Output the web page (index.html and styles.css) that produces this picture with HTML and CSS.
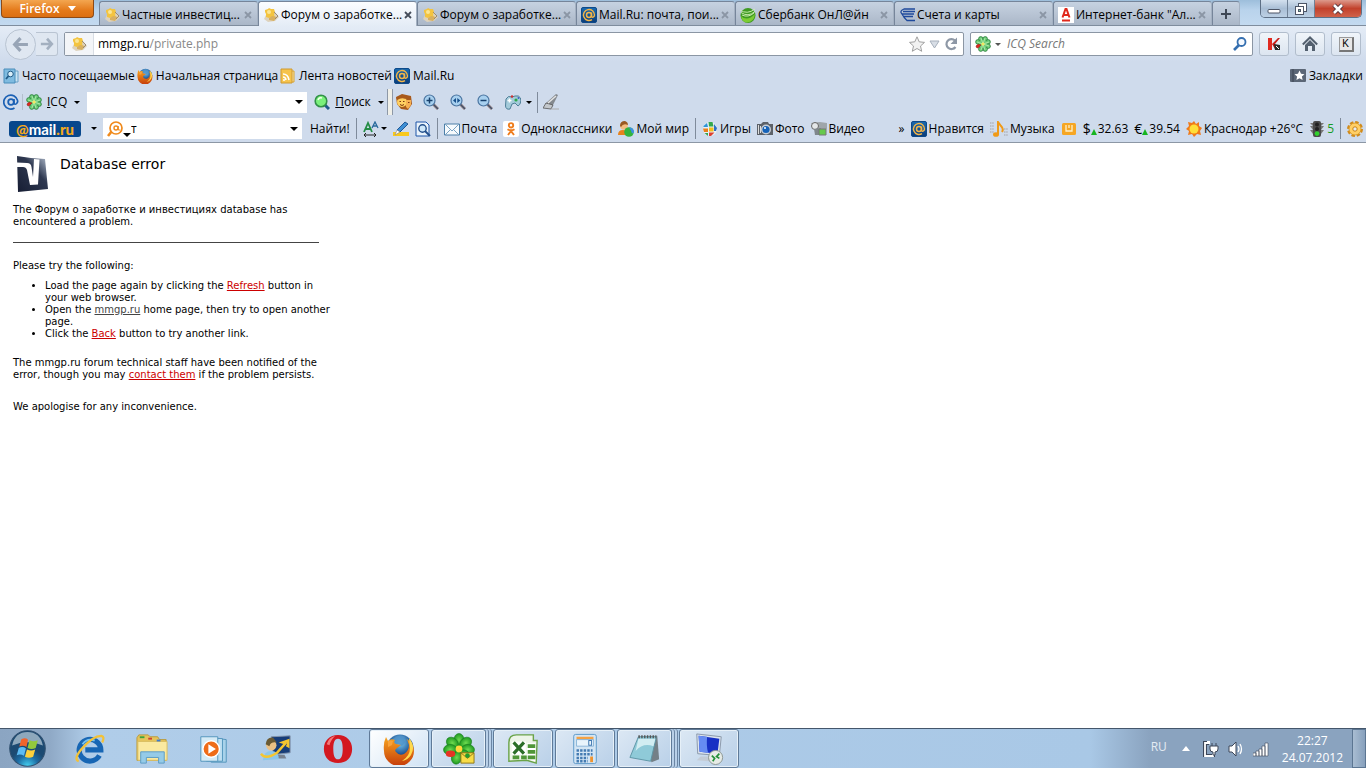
FILE: index.html
```html
<!DOCTYPE html>
<html lang="ru">
<head>
<meta charset="utf-8">
<title>Форум о заработке</title>
<link rel="stylesheet" href="styles.css">
</head>
<body>
<svg class="defs" aria-hidden="true">
  <defs>
    <linearGradient id="blue" x1="0" y1="0" x2="0" y2="1"><stop offset="0" stop-color="#1a6ab0"/><stop offset="1" stop-color="#0b3c78"/></linearGradient>
    <radialGradient id="leaf"><stop offset="0" stop-color="#6fdc50"/><stop offset="1" stop-color="#1f9a22"/></radialGradient>
    <radialGradient id="globe" cx=".5" cy=".3"><stop offset="0" stop-color="#7fd0f4"/><stop offset="1" stop-color="#0d3f86"/></radialGradient>
    <linearGradient id="fox" x1="0" y1="0" x2="0" y2="1"><stop offset="0" stop-color="#f7a520"/><stop offset="1" stop-color="#c63c0a"/></linearGradient>
    <radialGradient id="orb" cx=".5" cy="1"><stop offset="0" stop-color="#46d4f4"/><stop offset=".6" stop-color="#1c6ca4"/><stop offset="1" stop-color="#1c4a72"/></radialGradient>
  </defs>
  <symbol id="coin" viewBox="0 0 16 16"><path d="M1 12l5-10 6 3 4 5-4 4-7 1z" fill="#ddd2bc"/><path d="M2 3l3-1 1-1 2 1 3 0 1 3-1 3 1 2-4 0-2 1-3-1 0-3-1-2z" fill="#f3c440"/><circle cx="6" cy="5" r="2" fill="#fbe694"/><path d="M6 11l3-2 5 1-3 4-5-1z" fill="#d8b060"/><path d="M11 5l4 4-3 3" stroke="#9a8a72" fill="none"/></symbol>
  <symbol id="at" viewBox="0 0 16 16"><rect x=".5" y=".5" width="15" height="15" rx="1.500" fill="url(#blue)" stroke="#0d4a8a"/><circle cx="8" cy="8" r="2.500" fill="none" stroke="#f2b548" stroke-width="1.500"/><path d="M10.500 5.500v3.500q0 1.500 1.500 1.200Q13.500 9.500 13.500 8A5.500 5.500 0 1 0 11 12.600" fill="none" stroke="#f2b548" stroke-width="1.400"/></symbol>
  <symbol id="flower" viewBox="0 0 16 16"><circle cx="8" cy="8" r="5" fill="#62c870"/><g fill="#6ccc78" stroke="#1f7430" stroke-width=".7"><circle cx="5.800" cy="2.900" r="2.300"/><circle cx="10.200" cy="2.900" r="2.300"/><circle cx="13.100" cy="5.900" r="2.300"/><circle cx="13.100" cy="10.200" r="2.300"/><circle cx="10.200" cy="13.100" r="2.300"/><circle cx="5.800" cy="13.100" r="2.300"/><circle cx="2.900" cy="5.900" r="2.300"/></g><circle cx="8" cy="8" r="4.500" fill="#6ccc78"/><path d="M8 8L6 2M8 8l2-6M8 8l6-2M8 8l6 2M8 8l2 6M8 8l-2 6M8 8L2 6" stroke="#b8ecb0" stroke-width=".8"/><path d="M1 10q2-3 5-1l-3 3q-2 0-2-2z" fill="#e0281c" stroke="#902018" stroke-width=".6"/><circle cx="8" cy="8" r="1.600" fill="#f5e660"/></symbol>
  <symbol id="firefox" viewBox="0 0 32 32"><circle cx="17" cy="15" r="13.500" fill="url(#globe)"/><path d="M10 6q6-6 12-2-3 3 1 5l-4 4-4-2-5 1z" fill="#4f91c8" opacity=".8"/><path d="M3 4l2 4q3-3 7-1-2 3 1 4l5 1-4 3q-3 2-1 4 3 4 8 2 5-3 5-9l-2-6q7 5 7 12A15 15 0 0 1 1 18Q0 10 3 4z" fill="url(#fox)"/><path d="M26 5q7 8 2 17-3 5-9 6 8-5 8-13z" fill="#ffd94d"/><path d="M5 8q3-1 5 0l-1 4-4 2z" fill="#f8a23a"/></symbol>
  <symbol id="lens" viewBox="0 0 16 16"><path d="M10 10l5 5" stroke="#a08c8c" stroke-width="3"/><path d="M10 10l5 5" stroke="#40506a" stroke-width="1.400"/><circle cx="6.500" cy="6.500" r="5.500" fill="#a8d0ef" stroke="#4a74a0" stroke-width="1.200"/></symbol>
  <symbol id="close" viewBox="0 0 8 8"><path d="M1 1l6 6M7 1l-6 6" stroke="currentColor" stroke-width="1.800" fill="none"/></symbol>
</svg>

<header class="chrome">
  <div class="titlebar">
    <button class="app-button">Firefox <i class="tri white"></i></button>
    <nav class="tabs" aria-label="Вкладки">
      <div class="tab"><svg class="ico"><use href="#coin"/></svg><span>Частные инвестиц...</span><button class="tab-x" aria-label="Закрыть"><svg><use href="#close"/></svg></button></div>
      <div class="tab active"><svg class="ico"><use href="#coin"/></svg><span>Форум о заработке...</span><button class="tab-x" aria-label="Закрыть"><svg><use href="#close"/></svg></button></div>
      <div class="tab"><svg class="ico"><use href="#coin"/></svg><span>Форум о заработке...</span><button class="tab-x" aria-label="Закрыть"><svg><use href="#close"/></svg></button></div>
      <div class="tab"><svg class="ico"><use href="#at"/></svg><span>Mail.Ru: почта, пои...</span><button class="tab-x" aria-label="Закрыть"><svg><use href="#close"/></svg></button></div>
      <div class="tab"><svg class="ico" viewBox="0 0 16 16"><circle cx="8" cy="8.500" r="7.500" fill="#3f9a22"/><path d="M1 9q6 6 14-2-1 8-8 8.500Q2 15 1 9z" fill="#7ccc34"/><path d="M0 3q7 5 15-1M1 5.500q7 5 14-1M2 8q6 3 12-2" stroke="#d4f0b8" stroke-width=".9" fill="none"/></svg><span>Сбербанк ОнЛ@йн</span><button class="tab-x" aria-label="Закрыть"><svg><use href="#close"/></svg></button></div>
      <div class="tab"><svg class="ico" viewBox="0 0 16 16"><path d="M16 2H5Q0 4 3 7q2 4 5 6.500h8M4 4.500h12M3 7h12M5 9.500h9" stroke="#1f4a9c" stroke-width="1.300" fill="none"/></svg><span>Счета и карты</span><button class="tab-x" aria-label="Закрыть"><svg><use href="#close"/></svg></button></div>
      <div class="tab"><svg class="ico" viewBox="0 0 16 16"><path d="M0 0h16v16H0z" fill="#fff"/><path d="M4.500 10.500L7.500 2h1l3 8.500M5.500 8h5" stroke="#e0281c" stroke-width="2" fill="none"/><path d="M4 13.500h8" stroke="#e0281c" stroke-width="2"/></svg><span>Интернет-банк "Ал...</span><button class="tab-x" aria-label="Закрыть"><svg><use href="#close"/></svg></button></div>
      <button class="tab new" aria-label="Новая вкладка"><svg viewBox="0 0 12 12"><path d="M6 1v10M1 6h10" stroke="#3f4856" stroke-width="2"/></svg></button>
    </nav>
    <div class="window-buttons">
      <button aria-label="Свернуть"><svg viewBox="0 0 14 12"><rect x="1" y="6.500" width="12" height="3.500" rx="1" fill="#fff" stroke="#4c5566"/></svg></button>
      <button aria-label="Развернуть"><svg viewBox="0 0 14 12"><rect x="4.500" y=".5" width="8" height="8" fill="#fff" stroke="#4c5566"/><rect x="1.500" y="3.500" width="8" height="8" fill="#fff" stroke="#4c5566"/><rect x="4.500" y="6.500" width="2" height="2" fill="#8ca" stroke="#4c5566"/></svg></button>
      <button class="close" aria-label="Закрыть окно"><svg viewBox="0 0 14 12"><path d="M3 2l8 8M11 2l-8 8" stroke="#4c3038" stroke-width="4.500"/><path d="M3 2l8 8M11 2l-8 8" stroke="#fff" stroke-width="2.600"/></svg></button>
    </div>
  </div>

  <div class="navbar">
    <div class="history">
      <button class="back" aria-label="Назад"><svg viewBox="0 0 16 16"><path d="M8 2L2.500 8 8 14M3 8h12" stroke="#98a5b6" stroke-width="3" fill="none"/></svg></button>
      <button class="forward" aria-label="Вперёд"><svg viewBox="0 0 16 16"><path d="M8 2l5.500 6L8 14M13 8H1" stroke="#a3b0c0" stroke-width="3" fill="none"/></svg></button>
    </div>
    <div class="field url">
      <span class="identity"><svg class="ico"><use href="#coin"/></svg></span>
      <span class="address">mmgp.ru<em>/private.php</em></span>
      <button aria-label="В закладки"><svg viewBox="0 0 16 16"><path d="M8 .8l2.200 5 5.300.6-4 3.600 1.200 5.300L8 12.500l-4.700 2.800L4.500 10l-4-3.600 5.300-.6z" fill="#f2f2f2" stroke="#a0a0a0"/></svg></button>
      <button class="drop" aria-label="История"><svg viewBox="0 0 12 16"><path d="M2 5h9l-4.500 7z" fill="#d8dee6" stroke="#a7b0bc"/></svg></button>
      <button aria-label="Обновить"><svg viewBox="0 0 16 16"><path d="M12.500 11A5 5 0 1 1 12 4.500" stroke="#8e98a6" stroke-width="2.200" fill="none"/><path d="M14 1.500V8H7.500z" fill="#8e98a6"/></svg></button>
    </div>
    <div class="field search">
      <svg class="ico"><use href="#flower"/></svg><i class="tri gray"></i>
      <input type="text" placeholder="ICQ Search" aria-label="ICQ Search">
      <button aria-label="Искать"><svg viewBox="0 0 16 16"><path d="M7 9l-5 5" stroke="#356fb0" stroke-width="2.600"/><circle cx="9.500" cy="6" r="4" fill="#f4f9ff" stroke="#356fb0" stroke-width="1.800"/></svg></button>
    </div>
    <button class="square" aria-label="Kaspersky"><svg class="ico" viewBox="0 0 16 16"><path d="M2 2h4v12H2z" fill="#e02a20"/><path d="M6 8l6-6h2L9 8l3 5H9z" fill="#c81c18"/><path d="M8 8l6 1v5H9z" fill="#282828"/><path d="M10 10l3 3" stroke="#fff"/></svg></button>
    <button class="square" aria-label="Домой"><svg class="ico" viewBox="0 0 16 16"><path d="M.8 8.500L8 1.500l7.200 7" stroke="#53606f" stroke-width="2" fill="none"/><path d="M3 9l5-5 5 5v6h-3v-5H6v5H3z" fill="#53606f"/></svg></button>
    <button class="square key" aria-label="Клавиатура"><span>K</span></button>
  </div>

  <div class="bookmarks">
    <a href="#"><svg class="ico" viewBox="0 0 16 16"><path d="M5 3h10v11H5z" fill="#c8e4f4" stroke="#6ba3c8"/><path d="M1 1h11v14H1z" fill="#7fbbe0" stroke="#4a8dba"/><circle cx="7.500" cy="6" r="2.800" fill="#d9effa" stroke="#215a86"/><path d="M5.500 8L3 11" stroke="#215a86" stroke-width="1.800"/></svg>Часто посещаемые</a>
    <a href="#"><svg class="ico"><use href="#firefox"/></svg>Начальная страница</a>
    <a href="#"><svg class="ico" viewBox="0 0 16 16"><path d="M5 3h9v11H5z" fill="#fbe3a0" stroke="#d9a430"/><path d="M1 1h11v14H1z" fill="#f6c34c" stroke="#cf9a30"/><path d="M3 6q5 0 6 6M3 9q2.500 0 3 3" stroke="#fff" stroke-width="1.600" fill="none"/><circle cx="4" cy="12" r="1" fill="#fff"/></svg>Лента новостей</a>
    <a href="#"><svg class="ico"><use href="#at"/></svg>Mail.Ru</a>
    <a href="#" class="push"><svg class="ico" viewBox="0 0 16 16"><rect y="1" width="16" height="13" rx="1" fill="#5b6676"/><path d="M3 1v13" stroke="#3c4452"/><path d="M9.500 2.500l1.500 3.300 3.500.4-2.600 2.300.7 3.500-3.100-1.800L6.400 12l.7-3.500-2.600-2.300 3.500-.4z" fill="#fff"/></svg>Закладки</a>
  </div>

  <div class="toolbar icq">
    <svg class="ico" viewBox="0 0 16 16"><circle cx="8" cy="8" r="2.800" fill="none" stroke="#1a60b4" stroke-width="1.800"/><path d="M11 5v4.500q1 1.500 2.600 0Q15 8 14.600 6.500A7 7 0 1 0 11.500 14" fill="none" stroke="#1a60b4" stroke-width="1.700"/></svg>
    <i class="sep thin"></i>
    <button class="item"><svg class="ico"><use href="#flower"/></svg><span><u>I</u>CQ</span><i class="tri small"></i></button>
    <div class="combo"><input type="text" aria-label="Поисковый запрос"><i class="tri"></i></div>
    <button class="item"><svg class="ico" viewBox="0 0 16 16"><path d="M10 10l5 5" stroke="#205a8c" stroke-width="3"/><circle cx="7" cy="7" r="5.800" fill="#7af07c" stroke="#329048" stroke-width="1.600"/><path d="M4 6q1-3 4-2" stroke="#efffe8" stroke-width="1.500" fill="none"/></svg><span><u>П</u>оиск</span><i class="tri small"></i></button>
    <i class="grip"></i>
    <div class="tools">
      <button aria-label="Смайлы"><svg class="ico" viewBox="0 0 16 16"><path d="M0 3l6-3 9 2 1 8-4 6-7-1-4-5z" fill="#a85a1c"/><circle cx="6" cy="8" r="5" fill="#ffd060"/><path d="M10 6h5v5l-3 4-2-2z" fill="#f6b052"/><path d="M1 5q4-3 9-1" stroke="#a85a1c" stroke-width="2" fill="none"/><path d="M3.500 7.500h1.500M7 7.500h1.500M4 10.500q2 2 4 0M12 8.500h1.500" stroke="#7a3410" fill="none"/></svg></button>
      <button aria-label="Увеличить"><svg class="ico" viewBox="0 0 16 16"><use href="#lens"/><path d="M6.500 3.500v6M3.500 6.500h6" stroke="#17406c" stroke-width="1.500"/></svg></button>
      <button aria-label="Масштаб"><svg class="ico" viewBox="0 0 16 16"><use href="#lens"/><path d="M6 4v5L3 6.500zM7.300 4v5l3-2.500z" fill="#17508c"/></svg></button>
      <button aria-label="Уменьшить"><svg class="ico" viewBox="0 0 16 16"><use href="#lens"/><path d="M3.500 6.500h6" stroke="#17406c" stroke-width="1.500"/></svg></button>
    </div>
    <button class="item" aria-label="Игры"><svg class="ico" viewBox="0 0 16 16"><path d="M1 5q2-4 6-2l3-1q4-1 5.500 2 1 6-2.500 8l-3-3-3 1-2 5q-4 1-4.500-3z" fill="#a4cbda" stroke="#4f7f98"/><path d="M2.500 6.500h4M4.500 4.500v4" stroke="#fff" stroke-width="1.500"/><circle cx="11" cy="6" r="1.600" fill="#2ca84c"/><circle cx="7" cy="2.500" r="1.200" fill="#d03030"/><circle cx="13.500" cy="4" r="1" fill="#3a62c0"/></svg><i class="tri small"></i></button>
    <i class="sep"></i>
    <button aria-label="Очистить"><svg class="ico" viewBox="0 0 16 16"><path d="M2 10L13 0l2 1-6 12z" fill="#84898e"/><path d="M0 14l3-5 7 2-2 4z" fill="#c4c8cc" stroke="#555" stroke-width=".8"/><path d="M5 9l8-7" stroke="#e4e4e4" stroke-width="1.500"/><path d="M8 15h8" stroke="#aaa"/></svg></button>
  </div>

  <div class="toolbar mail">
    <a href="#" class="brand"><b>@</b>mail<b>.ru</b></a><i class="tri small"></i>
    <div class="combo"><svg class="ico" viewBox="0 0 16 16"><path d="M5 10l-4 5" stroke="#f08a1c" stroke-width="2.600"/><circle cx="9" cy="7" r="6" fill="#fff" stroke="#f08a1c" stroke-width="1.700"/><circle cx="9" cy="7" r="2" fill="none" stroke="#f08a1c" stroke-width="1.400"/><path d="M11.300 5v4h2" stroke="#f08a1c" fill="none"/></svg><i class="tri low"></i><input type="text" value="т" aria-label="Поиск Mail.Ru"><i class="tri"></i></div>
    <button class="go">Найти!</button>
    <i class="sep"></i>
    <button class="item tight" aria-label="Размер текста"><svg class="ico" viewBox="0 0 16 16"><path d="M1 11L5 2l4 9M2.500 8h5" stroke="#248c44" stroke-width="1.800" fill="none"/><path d="M9 7l3-6 3 6M10 5h4" stroke="#28699c" stroke-width="1.300" fill="none"/><path d="M1 14h12M3 12l-2 2 2 2M11 12l2 2-2 2" stroke="#222" fill="none"/></svg><i class="tri small"></i></button>
    <button aria-label="Выделить"><svg class="ico" viewBox="0 0 16 16"><path d="M0 11h16v4H0z" fill="#f8c81c"/><path d="M4 9l8-8 3 2-8 8z" fill="#3d8ed4" stroke="#1f5896"/><path d="M4 9l3 2-5 3z" fill="#fff" stroke="#888" stroke-width=".6"/></svg></button>
    <button aria-label="Найти на странице"><svg class="ico" viewBox="0 0 16 16"><path d="M1 1h10l3 3v11H1z" fill="#eaf3fb" stroke="#1c54a8"/><circle cx="7.500" cy="7.500" r="3.700" fill="#cfe8fa" stroke="#23508c" stroke-width="1.400"/><path d="M10 10l5 5" stroke="#23508c" stroke-width="2"/></svg></button>
    <i class="sep"></i>
    <a href="#"><svg class="ico" viewBox="0 0 16 16"><path d="M.5 3h15v11H.5z" fill="#f6fafd" stroke="#4c7fa8"/><path d="M1 3l7 7 7-7M1 14l5-5M15 14l-5-5" stroke="#79a3c4" fill="none"/></svg>Почта</a>
    <a href="#"><svg class="ico" viewBox="0 0 16 16"><rect width="16" height="16" rx="2" fill="#fff"/><circle cx="8" cy="4.300" r="2.200" fill="none" stroke="#ee7c1c" stroke-width="1.900"/><path d="M4.500 8.200q3.500 2.200 7 0M8 10l-3 4M8 10l3 4" stroke="#ee7c1c" stroke-width="1.900" fill="none"/></svg>Одноклассники</a>
    <a href="#"><svg class="ico" viewBox="0 0 16 16"><path d="M0 14q0-5 5-5 4 0 6 5z" fill="#e6821c"/><circle cx="6" cy="5" r="3.800" fill="#f4bd80"/><path d="M2 5q0-5 5-5 3 1 3 4-5-2-7 2z" fill="#9a5a22"/><circle cx="11" cy="11" r="4.800" fill="#32b43c"/><path d="M11 6.500q5 0 5 5l-2 1-1-3z" fill="#3d8ee8"/></svg>Мой мир</a>
    <i class="sep"></i>
    <a href="#"><svg class="ico" viewBox="0 0 16 16"><circle cx="8" cy="8" r="7" fill="#e8f0f8"/><path d="M1.500 5L5 2l1 4H1.500z" fill="#2c94d8"/><path d="M6.500 1h4l1 4.500H7z" fill="#34a84c"/><path d="M12 3l3 4-1 3h-2z" fill="#2c70c4"/><path d="M1 7.500h5V11H2z" fill="#e8801c"/><path d="M7 6.500h4.500v4H7z" fill="#f2be1c"/><path d="M7 11.500h5.500L9 15H7z" fill="#de4030"/><path d="M2.500 12H6v3z" fill="#38a44c"/></svg>Игры</a>
    <a href="#"><svg class="ico" viewBox="0 0 16 16"><path d="M0 3h4l2-2h5l1 2h4v11H0z" fill="#5c6168"/><path d="M1.500 4v9M3.500 5v7" stroke="#ddd"/><circle cx="9" cy="8.500" r="5" fill="#c8ced6"/><circle cx="9" cy="8.500" r="3.600" fill="#1562b8"/><circle cx="8" cy="7" r="1" fill="#fff"/></svg>Фото</a>
    <a href="#"><svg class="ico" viewBox="0 0 16 16"><path d="M0 2l9-1 7 1v6H4z" fill="#9fa6aa"/><circle cx="4" cy="5" r="3.500" fill="#e4e7e9" stroke="#666"/><path d="M3 8l7-1v7H4z" fill="#7f878c"/><path d="M8 8h7v6H8z" fill="#65c94c" stroke="#777"/></svg>Видео</a>
    <span class="more">»</span>
    <a href="#"><svg class="ico"><use href="#at"/></svg>Нравится</a>
    <a href="#"><svg class="ico wide" viewBox="0 0 18 16"><path d="M0 2h4M0 5h4M0 8h4M0 11h4M14 11h4M14 14h4M14 8h4" stroke="#b9bec8" stroke-width="2" stroke-dasharray="1.500 .7"/><path d="M8 13V1l3 4q3 3 1 6" stroke="#f09a18" stroke-width="2" fill="none"/><ellipse cx="6" cy="13.500" rx="3" ry="2.300" fill="#f09a18"/></svg>Музыка</a>
    <a href="#" aria-label="Деньги"><svg class="ico" viewBox="0 0 16 16"><rect x="1" y="2" width="14" height="12" rx="1.500" fill="#f6a623"/><path d="M5 4v6h6V4M8 4v3" stroke="#fff0c8" stroke-width="1.300" fill="none"/></svg></a>
    <a href="#" class="rate"><strong>$</strong><i class="up"></i>32.63</a>
    <a href="#" class="rate"><strong>€</strong><i class="up"></i>39.54</a>
    <a href="#"><svg class="ico" viewBox="0 0 16 16"><path d="M8 0l2 3 3-2v4l3 2-2 3 1 4-4-1-3 3-2-3-4 1 1-4-3-2 3-3-1-4 4 1z" fill="#f07a18"/><circle cx="8" cy="8" r="4.500" fill="#ffdf38"/></svg>Краснодар +26°C</a>
    <a href="#" class="jam"><svg class="ico" viewBox="0 0 16 16"><path d="M1 2h14l-3 3h3l-3 4h3l-3 4H4L1 9h3L1 5h3z" fill="#777"/><rect x="4" width="8" height="16" rx="2" fill="#4a4a4a"/><circle cx="8" cy="3.500" r="2" fill="#222"/><circle cx="8" cy="8" r="2" fill="#222"/><circle cx="8" cy="12.600" r="2.400" fill="#2fd02c"/></svg>5</a>
    <i class="sep"></i>
    <button aria-label="Настройки"><svg class="ico" viewBox="0 0 16 16"><circle cx="8" cy="8" r="6.600" fill="none" stroke="#d08a1c" stroke-width="2.800" stroke-dasharray="3.400 1.780"/><circle cx="8" cy="8" r="6" fill="#ffcf66" stroke="#d8941c" stroke-width=".8"/><circle cx="8" cy="8" r="2.200" fill="#e6edf5" stroke="#c98212"/></svg></button>
  </div>
</header>

<main class="page">
  <div class="error">
    <div class="error-head">
      <svg class="vb" viewBox="0 0 32 38" aria-label="vBulletin"><defs><linearGradient id="vb" x1="0" y1="1" x2="1" y2="0"><stop offset="0" stop-color="#161d33"/><stop offset=".6" stop-color="#2e3850"/><stop offset="1" stop-color="#b8c4d4"/></linearGradient></defs><path d="M0 1l14 2 14 1 1 10 2 20L1 37z" fill="url(#vb)"/><path d="M0 7.500l10 .5q4 0 4.500 4l1.500 10 1-18 5.500.5-1.500 25-8 .5L10 15q-1-3-4-3H0z" fill="#fff"/></svg>
      <h1>Database error</h1>
    </div>
    <p>The Форум о заработке и инвестициях database has encountered a problem.</p>
    <hr>
    <p class="try">Please try the following:</p>
    <ul>
      <li>Load the page again by clicking the <a href="#">Refresh</a> button in your web browser.</li>
      <li>Open the <a href="#" class="home">mmgp.ru</a> home page, then try to open another page.</li>
      <li>Click the <a href="#">Back</a> button to try another link.</li>
    </ul>
    <p class="staff">The mmgp.ru forum technical staff have been notified of the error, though you may <a href="#">contact them</a> if the problem persists.</p>
    <p class="sorry">We apologise for any inconvenience.</p>
  </div>
</main>

<footer class="taskbar">
  <button class="launch start" aria-label="Пуск"><svg viewBox="0 0 36 36"><circle cx="18" cy="18" r="17.300" fill="url(#orb)" stroke="#31506f"/><path d="M3 15Q6 2 18 2t15 13Q18 9 3 15z" fill="#b4c8d6" opacity=".75"/><path d="M12 9q4-2 6.500.5l-1.500 7q-3-2-7-.5z" fill="#f0642c"/><path d="M20 10q4 2 8 0l-2 7.500q-4 2-8 0z" fill="#92c83c"/><path d="M9.500 17.500q4-2 7 .5l-2 7q-3.500-2-7-.5z" fill="#5cbcf4"/><path d="M17.500 19q4 2 8 0l-2 7q-4 2-8 0z" fill="#fcd03c"/></svg></button>
  <button class="launch" aria-label="Internet Explorer"><svg viewBox="0 0 34 34"><path d="M27 24A11.500 11.500 0 1 1 28.500 18H12" stroke="#1766b4" stroke-width="5.500" fill="none"/><path d="M9 12q5-7 13-4" stroke="#74c2f2" stroke-width="2" fill="none"/><path d="M5 30q-6-2 3-13Q20 3 29 3q4 1 1 7" stroke="#f3c238" stroke-width="2.400" fill="none"/></svg></button>
  <button class="launch" aria-label="Проводник"><svg viewBox="0 0 34 34"><path d="M1 5l2-3h10l2 2h8l2 3h7v22H1z" fill="#e5c45c" stroke="#b99a3c"/><path d="M2 9h31v20H2z" fill="#fae9a0" stroke="#d9bd60"/><path d="M4 4.500h5" stroke="#3ca43c" stroke-width="2"/><path d="M13 6h4" stroke="#d04030" stroke-width="2"/><path d="M22 8h4" stroke="#3b7ad0" stroke-width="2"/><path d="M5 32V20h25v12h-6v-6H11v6z" fill="#95cbe8" stroke="#5b9bc4"/></svg></button>
  <button class="launch" aria-label="Windows Media Player"><svg viewBox="0 0 34 34"><path d="M14 5l16 2v24H14z" fill="#a8d2ea" stroke="#5294bc"/><path d="M9 5l17 1v24H9z" fill="#bfe0f2" stroke="#5294bc"/><path d="M3 4h18v26H3z" fill="#d5ebf6" stroke="#5294bc"/><circle cx="14" cy="17" r="8.800" fill="#ee6c18" stroke="#fff" stroke-width="1.500"/><path d="M11 12l8 5-8 5z" fill="#fff"/></svg></button>
  <button class="launch" aria-label="Удалённый помощник"><svg viewBox="0 0 34 34"><path d="M12 4l20-1v18l-18 2z" fill="#173d78" stroke="#8495ac"/><path d="M18 23h8l2 4H18z" fill="#77818f"/><path d="M3 29q1-10 9-10t8 9z" fill="#8dc7ea"/><circle cx="12" cy="13" r="5.500" fill="#eac084"/><path d="M6 12q1-8 8-7l4 5q-7-1-8 4z" fill="#6a5a34"/><path d="M1 22q5 7 17-1l9-10-3-1 6-2v6l-2-1" stroke="#f5c630" stroke-width="2.600" fill="none"/></svg></button>
  <button class="launch" aria-label="Opera"><svg viewBox="0 0 34 34"><path fill-rule="evenodd" d="M17 2c9 0 15 6 15 15s-6 15-15 15S2 26 2 17 8 2 17 2zm0 4c-4 0-5 5-5 11s1 11 5 11 5-5 5-11-1-11-5-11z" fill="#d31820"/><path d="M5 12q2-7 9-9-5 5-6 10z" fill="#f47878"/></svg></button>

  <button class="task current" aria-label="Firefox"><svg><use href="#firefox"/></svg></button>
  <button class="task stacked" aria-label="ICQ"><svg viewBox="0 0 34 34"><g fill="url(#leaf)" stroke="#167a1c" stroke-width=".6"><ellipse cx="17" cy="7.500" rx="5.500" ry="7"/><ellipse cx="17" cy="7.500" rx="5.500" ry="7" transform="rotate(48 17 17)"/><ellipse cx="17" cy="7.500" rx="5.500" ry="7" transform="rotate(94 17 17)"/><ellipse cx="17" cy="7.500" rx="5.500" ry="7" transform="rotate(140 17 17)"/><ellipse cx="17" cy="7.500" rx="5.500" ry="7" transform="rotate(195 17 17)"/><ellipse cx="17" cy="7.500" rx="5.500" ry="7" transform="rotate(-48 17 17)"/><ellipse cx="17" cy="7.500" rx="5.500" ry="7" transform="rotate(-94 17 17)"/></g><ellipse cx="8" cy="22" rx="5" ry="3.500" fill="#e63424"/><circle cx="17" cy="17" r="3.600" fill="#ffd83c"/><path d="M19 21h14v11H19z" fill="#f8dc48" stroke="#8d7418"/><path d="M19 21l7 6 7-6" stroke="#8d7418" fill="none"/><circle cx="26" cy="24" r="2.500" fill="#279c2c"/></svg></button>
  <button class="task" aria-label="Excel"><svg viewBox="0 0 34 34"><path d="M2 30V10q0-8 8-8h18v6h4l-1 24-10-3z" fill="#eef5e8" stroke="#6aa348" stroke-width="1.500"/><path d="M21 11h9v19l-9-2z" fill="#fff"/><path d="M22 12h8v4h-8zM22 18h8v4h-8zM6 24h7v4H6zM15 24h6v4h-6zM22 24h8v4h-8z" fill="#4f9638"/><path d="M5 9h15v14H5z" fill="#fff"/><path d="M7 10l11 12M18 10L7 22" stroke="#2c6e28" stroke-width="3.400"/></svg></button>
  <button class="task" aria-label="Калькулятор"><svg viewBox="0 0 34 34"><rect x="5" y="1.500" width="24" height="31" rx="2" fill="#d3e5f4" stroke="#5b98c8"/><path d="M8 4h18v3H8z" fill="#f4a244"/><path d="M8 7h18v7H8z" fill="#e9f4fc" stroke="#8ab5d8"/><rect x="21" y="8" width="3" height="5" fill="none" stroke="#3973ad"/><path d="M8 18.500h17M8 22.500h17M8 26.500h12M8 30h12" stroke="#447bb2" stroke-width="2.600" stroke-dasharray="2.600 1.200"/><path d="M24 25v6" stroke="#ef9430" stroke-width="3"/></svg></button>
  <button class="task stacked" aria-label="Блокнот"><svg viewBox="0 0 34 34"><path d="M11 4l19-1 2 25-8 3z" fill="#748087"/><path d="M10 4h19l-6 26-22-4z" fill="#8fcad8" stroke="#5d94a4"/><path d="M10 6h18l-2 8Q15 10 7 19z" fill="#d2edf2"/><path d="M10 4h19" stroke="#555" stroke-width="3" stroke-dasharray="1.500 1.500"/></svg></button>
  <button class="task" aria-label="Удалённый рабочий стол"><svg viewBox="0 0 34 34"><path d="M4 1l26 3-2 20-23-2z" fill="#dce4ee" stroke="#8795a8"/><path d="M6 3l22 3-2 16-19-2z" fill="#1730c4"/><path d="M6 3l9 1q-1 10 1 17l-9-1z" fill="#668cf2"/><path d="M8 25h9v5l-13-1z" fill="#c4ccd6"/><circle cx="24" cy="26" r="7.500" fill="#e6ebe6" stroke="#8b9490"/><path d="M20 24l3 3-2 3M28 22l-3 3 3 2" stroke="#239038" stroke-width="1.800" fill="none"/></svg></button>

  <div class="tray">
    <span class="lang">RU</span>
    <button aria-label="Скрытые значки"><svg class="hid" viewBox="0 0 8 5"><path d="M0 5l4-5 4 5z" fill="#fff"/></svg></button>
    <svg class="ico" viewBox="0 0 16 16"><path d="M6 2H2v13h8v-2M4 1h3" stroke="#3c4658" stroke-width="4" fill="none"/><path d="M7 2H2v13h8v-2M4 1h3" stroke="#fff" stroke-width="1.800" fill="none"/><path d="M7 5h8v3q0 3-3 3v3h-2v-3q-3 0-3-3zM9 2v3M13 2v3" fill="#fff" stroke="#3c4658"/></svg>
    <svg class="ico" viewBox="0 0 16 16"><path d="M1 5h3l4-4v14l-4-4H1z" fill="#fff" stroke="#3c4658"/><path d="M10 5q2 3 0 6M12 3q3 5 0 10" stroke="#fff" stroke-width="1.300" fill="none"/></svg>
    <svg class="ico" viewBox="0 0 16 16"><g fill="#fff" stroke="#3c4658" stroke-width=".6"><path d="M0 12h3v3H0zM3 10h3v5H3zM6 8h3v7H6zM9 5h3v10H9zM12 2h3v13h-3z"/></g></svg>
    <time class="clock">22:27<br>24.07.2012</time>
    <button class="desktop" aria-label="Свернуть все окна"></button>
  </div>
</footer>
</body>
</html>
```
FILE: styles.css
```css
* { box-sizing: border-box; }

body {
  margin: 0;
  min-height: 100vh;
  display: flex;
  flex-direction: column;
  background: #fff;
  color: #000;
  font: 12px/16px "Open Sans", "Noto Sans", sans-serif;
}

button, input {
  margin: 0;
  padding: 0;
  border: 0;
  background: none;
  color: inherit;
  font: inherit;
}

a { color: inherit; text-decoration: none; }
svg { display: block; flex: none; }
.defs { position: absolute; width: 0; height: 0; }
.ico { width: 16px; height: 16px; flex: none; }
.ico.wide { width: 18px; }

.tri {
  flex: none;
  border: 4px solid transparent;
  border-top-color: #000;
  border-bottom: 0;
}
.tri.small { border-width: 3px; border-bottom: 0; }
.tri.white { border-top-color: #fff; border-top-width: 5px; }
.tri.gray { border-width: 3px; border-bottom: 0; border-top-color: #555; }
.tri.low { margin-top: 12px; }

.chrome {
  background: #cfdbec;
  border-bottom: 1px solid #8c97a5;
  white-space: nowrap;
}

.titlebar {
  display: flex;
  align-items: flex-start;
  height: 26px;
  padding: 0 4px 0 1px;
  background: linear-gradient(#9dbedb, #b9d3ec 40%, #c3daf0);
  border-bottom: 1px solid #7f8d9e;
}
.app-button {
  display: flex;
  align-items: center;
  justify-content: center;
  gap: 8px;
  width: 93px;
  height: 18px;
  margin-right: 5px;
  border: 1px solid #8c4a17;
  border-top: 0;
  border-radius: 0 0 4px 4px;
  background: linear-gradient(#f3a650, #e47a1b 60%, #db6f12);
  color: #fff;
  font-weight: 600;
}
.tabs { display: flex; flex: 1 1 0; min-width: 0; padding-top: 1px; height: 26px; }
.tab {
  display: flex;
  align-items: center;
  flex: 0 1 159px;
  min-width: 0;
  gap: 2px;
  height: 24px;
  padding: 2px 5px 0 4px;
  border: 1px solid #76859a;
  border-right-color: #a4b1c2;
  border-bottom: 0;
  border-radius: 3px 3px 0 0;
  background: linear-gradient(#c6d2e1, #b6c2d2 60%, #aab7c8);
}
.tab span { flex: 1; }
.tab.active {
  height: 25px;
  background: linear-gradient(#fbfdff, #e4ecf6);
}
.tab-x { color: #8b96a5; }
.tab-x svg { width: 8px; height: 8px; }
.active .tab-x { color: #454d5a; }
.tab.new { flex: 0 0 28px; justify-content: center; padding: 0; }
.tab.new svg { width: 12px; height: 12px; }

.window-buttons {
  display: flex;
  height: 18px;
  border: 1px solid #5d6f85;
  border-top: 0;
  border-radius: 0 0 5px 5px;
  overflow: hidden;
}
.window-buttons button {
  display: grid;
  place-items: center;
  width: 27px;
  border-right: 1px solid #6f8196;
  background: linear-gradient(#d3e0ee, #a9bed5 50%, #bcd0e4);
}
.window-buttons svg { width: 14px; height: 12px; }
.window-buttons .close {
  width: 46px;
  border-right: 0;
  background: linear-gradient(#dd9a8c, #c2412c 50%, #d0624a);
}

.navbar {
  display: flex;
  align-items: center;
  gap: 6px;
  height: 36px;
  padding: 0 5px;
  background: linear-gradient(#e4ecf6, #cfdbec);
}
.history { display: flex; align-items: center; width: 53px; }
.back, .forward {
  display: grid;
  place-items: center;
  border: 1px solid #b9c4d2;
  background: #dfe7f1;
}
.back { width: 31px; height: 31px; border-radius: 50%; }
.back svg { width: 17px; height: 17px; }
.forward { width: 22px; height: 24px; border-left: 0; border-radius: 0 3px 3px 0; }
.forward svg { width: 14px; height: 14px; }

.field {
  display: flex;
  align-items: center;
  height: 24px;
  border: 1px solid #8b96a4;
  border-radius: 2px;
  background: #fff;
}
.url { flex: 894 1 0; padding-right: 4px; }
.search { flex: 273 1 0; gap: 4px; padding: 0 4px; }
.search input { flex: 1; min-width: 0; padding-left: 2px; font-style: italic; }
.search input::placeholder { color: #777; opacity: 1; }
.field button svg { width: 16px; height: 16px; }
.field button { margin-left: 2px; }
.field .drop svg { width: 14px; }
.identity {
  display: grid;
  place-items: center;
  width: 29px;
  height: 22px;
  border-right: 1px solid #d8dde4;
  background: #f3f5f8;
}
.address { flex: 1; padding-left: 4px; }
.address em { color: #888; font-style: normal; }
.square {
  display: grid;
  place-items: center;
  width: 30px;
  height: 24px;
  border: 1px solid #b1bdcc;
  border-radius: 3px;
  background: linear-gradient(#f0f5fa, #dce5f0);
}
.key span {
  width: 15px;
  height: 15px;
  border: 1px solid #999;
  border-right: 2px solid #777;
  border-bottom: 2px solid #777;
  background: #e8e8e8;
  font: 10px/12px "Liberation Sans", sans-serif;
}

.bookmarks {
  display: flex;
  align-items: center;
  gap: 2px;
  height: 27px;
  padding: 0 3px;
}
.bookmarks a { display: flex; align-items: center; gap: 3px; }
.bookmarks .push { margin-left: auto; }

.toolbar { display: flex; align-items: center; padding: 0 3px; }
.sep { flex: none; width: 1px; height: 21px; background: #7f8b9b; }
.grip { width: 6px; height: 26px; border: solid #8d98a7; border-width: 0 1px; background: #efefe8; }
.combo { display: flex; align-items: center; height: 21px; padding: 0 4px; background: #fff; }
.combo input { flex: 1; width: 0; outline: 0; }

.item { display: flex; align-items: center; gap: 5px; }
.item span + .tri { margin-left: 2px; }

.icq { height: 26px; gap: 3px; }
.icq .sep { margin: 0 2px; }
.icq .sep.thin { height: 16px; margin: 0; background: #b4bfcd; }
.icq .combo { width: 220px; margin: 0 4px; }
.tools { display: flex; gap: 11px; margin-right: 9px; }

.mail { height: 27px; gap: 6px; }
.mail a { display: flex; flex: none; align-items: center; gap: 2px; }
.mail .brand {
  justify-content: center;
  gap: 0;
  width: 72px;
  height: 16px;
  margin: 0 4px 0 0;
  border-radius: 3px;
  background: #07478c;
  color: #fff;
  font: bold 15px/16px Lato, sans-serif;
}
.mail { padding-left: 9px; }
.brand b { color: #f5a91d; }
.mail .combo { flex: none; width: 199px; }
.mail .go { margin-left: 2px; }
.mail .tight { gap: 2px; }
.mail .more { margin-left: auto; }
.mail .rate { gap: 0; }
.rate strong { font-size: 14px; font-weight: 400; }
.up { margin: 7px 1px 0 0; border: 3px solid transparent; border-top: 0; border-bottom: 6px solid #16b520; }
.mail .jam { color: #179c24; }

.page { flex: 1; }
.error {
  width: 322px;
  margin: 12px 0 0 13px;
  font: 10px/12px "DejaVu Sans", sans-serif;
}
.error-head { display: flex; gap: 11px; height: 49px; padding-left: 4px; }
.vb { width: 32px; height: 38px; }
.error h1 { margin: 0; font: 14px/18px "DejaVu Sans", sans-serif; }
.error p { margin: 0; }
.error hr { width: 306px; margin: 14px 0 17px; border: 0; border-top: 1px solid #444; }
.error ul { margin: 8px 0 17px; padding-left: 32px; }
.error a { color: #c00; text-decoration: underline; }
.error .home { color: #444; }
.error .sorry { margin-top: 20px; }

.taskbar {
  display: flex;
  align-items: center;
  height: 40px;
  border-top: 1px solid #44566b;
  background: linear-gradient(90deg, #8ba5c2, #8fa9c6 50px, #b0cde9 90px, #a9c8e6 1090px, #8aa3bf 1150px, #8aa3bf);
}
.launch { display: grid; place-items: center; width: 62px; }
.launch svg { width: 32px; height: 32px; }
.launch.start { width: 59px; padding-right: 5px; }
.start svg { width: 37px; height: 37px; }
.task {
  display: grid;
  place-items: center;
  width: 60px;
  height: 39px;
  margin-right: 2px;
  border: 1px solid #5f7a98;
  border-radius: 3px;
  background: linear-gradient(135deg, #dce8f4, #b9d0e8);
  box-shadow: inset 0 0 0 1px #e6f0f8;
}
.task svg { width: 32px; height: 32px; }
.task.current { background: linear-gradient(135deg, #fff, #cfe2f4); }
.task.stacked { width: 55px; margin-right: 7px; box-shadow: inset 0 0 0 1px #e6f0f8, 2px 0 #b9d0e8, 3px 0 #6c86a4, 5px 0 #b9d0e8, 6px 0 #6c86a4; }

.tray { display: flex; align-items: center; gap: 9px; margin-left: auto; color: #fff; }
.lang { padding: 0 6px 4px 0; color: #e4ebf3; }
.hid { width: 8px; height: 5px; margin-right: 4px; }
.clock { margin-left: 4px; text-align: center; line-height: 17px; }
.desktop {
  width: 14px;
  height: 39px;
  border: 1px solid #5c7692;
  background: linear-gradient(90deg, #a9bdd2, #87a0bc);
}
```
